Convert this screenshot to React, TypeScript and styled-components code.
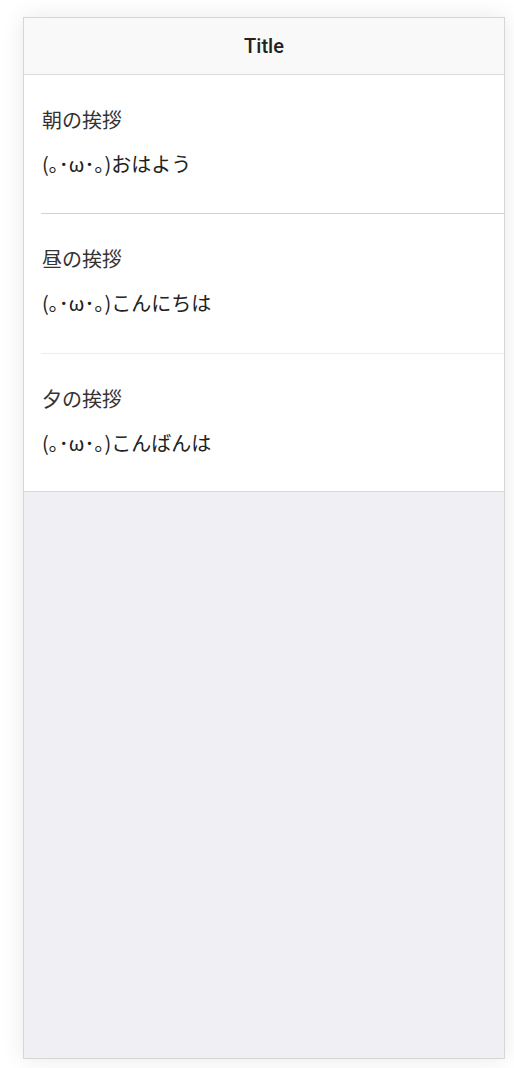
import React from 'react'
import styled, { createGlobalStyle } from 'styled-components'

const GlobalStyle = createGlobalStyle`
  html, body {
    margin: 0;
    padding: 0;
    background: #fff;
  }
  body {
    font-family: "Liberation Sans", "Noto Sans CJK JP", sans-serif;
    -webkit-font-smoothing: antialiased;
  }
`

const greetings = [
  { title: '朝の挨拶', body: '(｡･ω･｡)おはよう', height: 139, line: '#d2d2d2' },
  { title: '昼の挨拶', body: '(｡･ω･｡)こんにちは', height: 140, line: '#ececec' },
  { title: '夕の挨拶', body: '(｡･ω･｡)こんばんは', height: 137, line: '' },
]

const Page = styled.div`
  padding: 17px 9px 9px 23px;
`

const Device = styled.div`
  box-sizing: border-box;
  width: 482px;
  height: 1042px;
  border: 1px solid #d6d6d6;
  background: #efeff4;
  box-shadow: 0 0 22px rgba(0, 0, 0, 0.09);
  display: flex;
  flex-direction: column;
`

const NavBar = styled.header`
  height: 56px;
  flex: none;
  background: #f9f9f9;
  border-bottom: 1px solid #dcdcdc;
  display: flex;
  align-items: center;
  justify-content: center;
`

const NavTitle = styled.h1`
  margin: 0;
  font-family: Roboto, "Liberation Sans", sans-serif;
  font-size: 20px;
  font-weight: 500;
  color: #222;
`

const List = styled.ul`
  list-style: none;
  margin: 0;
  padding: 0;
  background: #fff;
  border-bottom: 1px solid #d9d9d9;
`

const Item = styled.li`
  padding-left: 17px;
`

const ItemInner = styled.div<{ $height: number; $line: string }>`
  box-sizing: border-box;
  height: ${(p) => p.$height}px;
  padding: 31px 0 0 1px;
  display: flex;
  flex-direction: column;
  gap: 16px;
  border-bottom: ${(p) => (p.$line ? `1px solid ${p.$line}` : 'none')};
`

const ItemTitle = styled.div`
  font-family: "Noto Sans CJK JP", sans-serif;
  font-size: 20px;
  line-height: 28px;
  color: #333;
`

const ItemBody = styled.div`
  font-family: "Noto Sans CJK JP", sans-serif;
  font-size: 20px;
  line-height: 28px;
  color: #222;
`

export default function App() {
  return (
    <>
      <GlobalStyle />
      <Page>
        <Device>
          <NavBar>
            <NavTitle>Title</NavTitle>
          </NavBar>
          <List>
            {greetings.map((g) => (
              <Item key={g.title}>
                <ItemInner $height={g.height} $line={g.line}>
                  <ItemTitle>{g.title}</ItemTitle>
                  <ItemBody>{g.body}</ItemBody>
                </ItemInner>
              </Item>
            ))}
          </List>
        </Device>
      </Page>
    </>
  )
}
